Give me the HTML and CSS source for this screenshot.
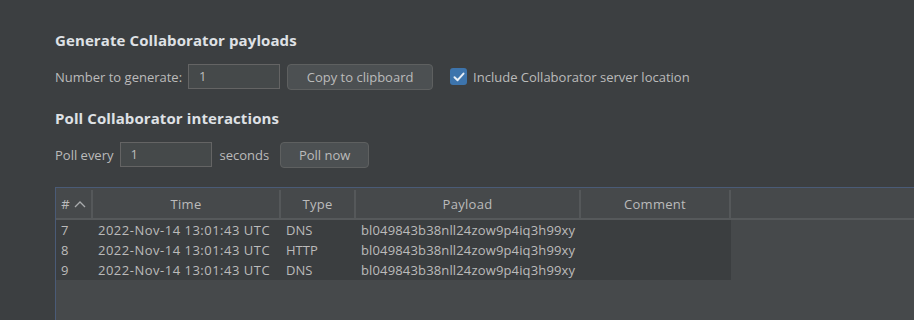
FILE: index.html
```html
<!DOCTYPE html>
<html lang="en">
<head>
  <meta charset="UTF-8" />
  <title>Collaborator client</title>
  <link rel="stylesheet" href="styles.css">
</head>
<body>
  <main class="panel">

    <section class="group">
      <h2>Generate Collaborator payloads</h2>
      <div class="row">
        <span class="label">Number to generate:</span>
        <div class="field">1</div>
        <button class="btn copy-btn">Copy to clipboard</button>
        <label class="check">
          <span class="box">
            <svg width="12" height="10" viewBox="0 0 12 10">
              <path d="M1.5 5.2 L4.6 8.2 L10.5 1.6" fill="none" stroke="#e8eef5" stroke-width="2" stroke-linecap="round" stroke-linejoin="round"/>
            </svg>
          </span>
          Include Collaborator server location
        </label>
      </div>
    </section>

    <section class="group poll">
      <h2>Poll Collaborator interactions</h2>
      <div class="row">
        <span class="label">Poll every</span>
        <div class="field">1</div>
        <span class="label seconds">seconds</span>
        <button class="btn poll-btn">Poll now</button>
      </div>
    </section>

    <div class="table-wrap">
      <div class="thead">
        <div class="th c-num">#
          <svg width="12" height="8" viewBox="0 0 12 8">
            <path d="M1 7 L6 2 L11 7" fill="none" stroke="#a9abad" stroke-width="1.3"/>
          </svg>
        </div>
        <div class="th c-time">Time</div>
        <div class="th c-type">Type</div>
        <div class="th c-payload">Payload</div>
        <div class="th c-comment">Comment</div>
        <div class="th c-rest"></div>
      </div>
      <div class="tbody">
        <div class="tr">
          <div class="td c-num">7</div>
          <div class="td c-time">2022-Nov-14 13:01:43 UTC</div>
          <div class="td c-type">DNS</div>
          <div class="td c-payload">bl049843b38nll24zow9p4iq3h99xy</div>
          <div class="td c-comment"></div>
        </div>
        <div class="tr">
          <div class="td c-num">8</div>
          <div class="td c-time">2022-Nov-14 13:01:43 UTC</div>
          <div class="td c-type">HTTP</div>
          <div class="td c-payload">bl049843b38nll24zow9p4iq3h99xy</div>
          <div class="td c-comment"></div>
        </div>
        <div class="tr">
          <div class="td c-num">9</div>
          <div class="td c-time">2022-Nov-14 13:01:43 UTC</div>
          <div class="td c-type">DNS</div>
          <div class="td c-payload">bl049843b38nll24zow9p4iq3h99xy</div>
          <div class="td c-comment"></div>
        </div>
      </div>
    </div>

  </main>
</body>
</html>
```

FILE: styles.css
```css
* {
  margin: 0;
  padding: 0;
  box-sizing: border-box;
}

html, body {
  height: 100%;
}

body {
  background: #3c3f41;
  color: #bbbbbb;
  font-family: "Open Sans", "Noto Sans", sans-serif;
  font-size: 13px;
  overflow: hidden;
}

.panel {
  padding: 30px 0 0 55px;
  display: flex;
  flex-direction: column;
  height: 100%;
}

/* Section headings */
.group h2 {
  font-size: 15px;
  font-weight: 700;
  color: #dfe1e5;
  line-height: 20px;
  letter-spacing: 0.1px;
}

.group .row {
  display: flex;
  align-items: center;
  margin-top: 14px;
  height: 25px;
}

.poll {
  margin-top: 19px;
}

.label {
  margin-right: 6px;
}

.seconds {
  margin-left: 8px;
  margin-right: 11px;
}

.field {
  width: 92px;
  height: 25px;
  background: #45494a;
  border: 1px solid #646464;
  padding: 0 10px;
  line-height: 23px;
  color: #bbbbbb;
}

.btn {
  height: 26px;
  background: #4c5052;
  border: 1px solid #5e6060;
  border-radius: 4px;
  color: #bbbbbb;
  font-family: inherit;
  font-size: 13px;
}

.copy-btn {
  width: 146px;
  margin-left: 7px;
}

.poll-btn {
  width: 89px;
}

.check {
  display: flex;
  align-items: center;
  margin-left: 17px;
}

.box {
  width: 17px;
  height: 17px;
  background: #3d74ac;
  border-radius: 3px;
  display: flex;
  align-items: center;
  justify-content: center;
  margin-right: 6px;
}

/* Table */
.table-wrap {
  margin-top: 20px;
  flex: 1;
  background: #46494b;
  border-top: 1px solid #4a5b77;
  border-left: 1px solid #4a5b77;
}

.thead {
  display: flex;
  height: 32px;
  border-bottom: 2px solid #56595b;
  padding-top: 2px;
}

.th {
  display: flex;
  align-items: center;
  justify-content: center;
  border-right: 2px solid #55585a;
  color: #bbbbbb;
  letter-spacing: 0.3px;
}

.th svg {
  margin-left: 4px;
}

.th.c-rest {
  flex: 1;
  border-right: none;
}

.c-num { width: 37px; }
.c-time { width: 188px; }
.c-type { width: 75px; }
.c-payload { width: 225px; }
.c-comment { width: 150px; }

.tbody {
  width: 675px;
}

.tr {
  display: flex;
  height: 20px;
  background: #3b3e40;
  line-height: 21px;
}

.td {
  padding-left: 5px;
  white-space: nowrap;
}

.td.c-time {
  letter-spacing: 0.5px;
}

.td.c-payload {
  letter-spacing: 0.15px;
}
```
